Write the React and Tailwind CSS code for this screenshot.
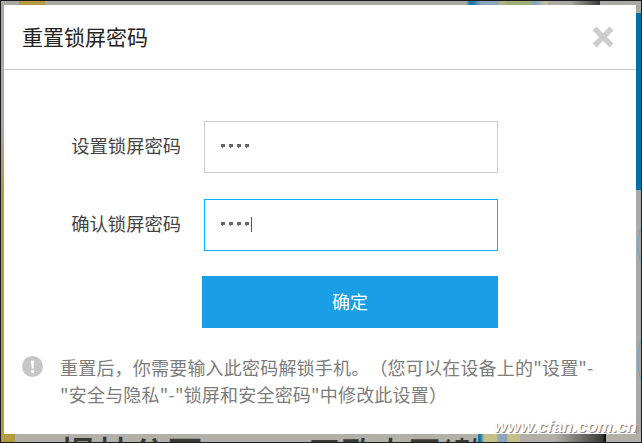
import React from "react";

const cjk = "font-['Noto_Sans_CJK_SC','Liberation_Sans',sans-serif]";

// the four masked dots of a password field
function Dots({ caret }) {
  return (
    <div className="flex items-center h-full pl-4 gap-1 -mt-[1px]">
      {[0, 1, 2, 3].map((i) => (
        <svg key={i} width="4" height="4" viewBox="0 0 4 4" className="block">
          <path d="M0 0h4v3H2v1H1V3H0z" fill="#666" />
        </svg>
      ))}
      {caret && <span className="w-px h-[15px] bg-[#555] -ml-[2px] mt-[1px]" />}
    </div>
  );
}

function Row({ label, focused, caret }) {
  return (
    <div className="flex items-center gap-[23px] h-[52px]">
      <div className="w-[177px] pb-[4px] text-right text-[18.3px] leading-[24px] text-[#444] whitespace-nowrap">
        {label}
      </div>
      <div className={`w-[294px] h-[52px] border bg-white ${focused ? "border-[#0aaeff]" : "border-[#ccc]"}`}>
        <Dots caret={caret} />
      </div>
    </div>
  );
}

export default function App() {
  return (
    <div className={`relative flex flex-col w-[642px] h-[443px] overflow-hidden border border-[#1c1c1c] bg-[#aaa9a5] ${cjk}`}>
      {/* backdrop showing above the dialog */}
      <div className="flex h-[4px] pl-[18px]">
        <div className="w-[26px] bg-[#b39b40]" />
        <div className="w-[421px]" />
        <div className="w-[84px] bg-[linear-gradient(90deg,#aaa9a5_0%,#0f78a8_5%,#0f78a8_8%,#8fa5bb_18%,#8fa5bb_38%,#b5b48a_42%,#9fae78_50%,#9fae78_75%,#7ea4c4_82%,#c9c0a5_95%,#aaa9a5_100%)]" />
        <div className="w-[50px] bg-[linear-gradient(90deg,#aaa9a5_40%,#3a3a3a_100%)]" />
      </div>

      <div className="flex h-[429px]">
        <div className="w-[3px] bg-[linear-gradient(180deg,#aaa9a5_28%,#b39b40_43%)]" />

        <div className="w-[632px] bg-white">
          <div className="flex items-center justify-between h-[65px] border-b border-[#ccc] pl-[18px] pr-[21px]">
            <h2 className="text-[21px] font-normal text-[#222]">重置锁屏密码</h2>
            <svg width="24" height="24" viewBox="0 0 24 24">
              <path d="M3.5 3.5l17 17M20.5 3.5l-17 17" stroke="#cdcdcd" strokeWidth="5.5" fill="none" />
            </svg>
          </div>

          <div className="flex flex-col gap-[26px] pt-[51px]">
            <Row label="设置锁屏密码" />
            <Row label="确认锁屏密码" focused caret />
          </div>

          <button className="block ml-[198px] mt-[25px] w-[296px] h-[52px] pb-[2px] bg-[#1a9fe6] text-white text-[18px]">
            确定
          </button>

          <div className="flex items-start gap-[17px] mt-[28px] pl-[18px]">
            <svg width="21" height="21" viewBox="0 0 21 21" className="shrink-0">
              <circle cx="10.5" cy="10.5" r="10.5" fill="#c6c6c6" />
              <path d="M9 4.5h3l-.5 8h-2z" fill="#fff" />
              <circle cx="10.5" cy="15.5" r="1.7" fill="#fff" />
            </svg>
            <p className="-mt-[2px] text-[18px] leading-[27px] tracking-[0.2px] text-[#7c7c7c] whitespace-nowrap [text-spacing-trim:space-all]">
              重置后，你需要输入此密码解锁手机。（您可以在设备上的"设置"-
              <br />
              "安全与隐私"-"锁屏和安全密码"中修改此设置）
            </p>
          </div>
        </div>

        <div className="flex flex-col w-[5px]">
          <div className="h-[8px]" />
          <div className="h-[177px] bg-[#0070a8]" />
          <svg width="5" height="165" viewBox="0 0 5 165" className="mt-[35px]">
            <path d="M5 2Q-1 20 5 38M5 114Q-1 134 5 156" stroke="#6aa5c8" strokeWidth="1" fill="none" />
          </svg>
        </div>
      </div>

      {/* backdrop showing below the dialog */}
      <div className="flex h-[8px] bg-[#b2b1a9]">
        <div className="w-[14px] bg-[#b39b40]" />
        <div className="flex w-[463px] pl-[44px] overflow-hidden text-[36px] leading-[36px] text-[#3a3a34] whitespace-nowrap font-medium">
          <span>报林公园</span>
          <span className="ml-[105px] text-[33px]">天歐大厦(數</span>
        </div>
        <div className="w-[42px] bg-[linear-gradient(90deg,#0f78a8_0%,#0f78a8_5%,#c5bf8a_15%,#c5bf8a_45%,#8fa5bb_48%,#8fa5bb_68%,#c5bf8a_72%,#c5bf8a_100%)]" />
        <div className="w-[86px] bg-[linear-gradient(90deg,#b2b1a9_40%,#3a3a3a_96%,#000_100%)]" />
      </div>

      {/* watermark */}
      <div className="absolute right-[4px] bottom-[5px] font-['Liberation_Sans',sans-serif] italic font-bold text-[17px] leading-[20px] text-white [text-shadow:1px_1px_1px_#777] whitespace-nowrap">
        www.cfan.com.cn
      </div>
    </div>
  );
}
